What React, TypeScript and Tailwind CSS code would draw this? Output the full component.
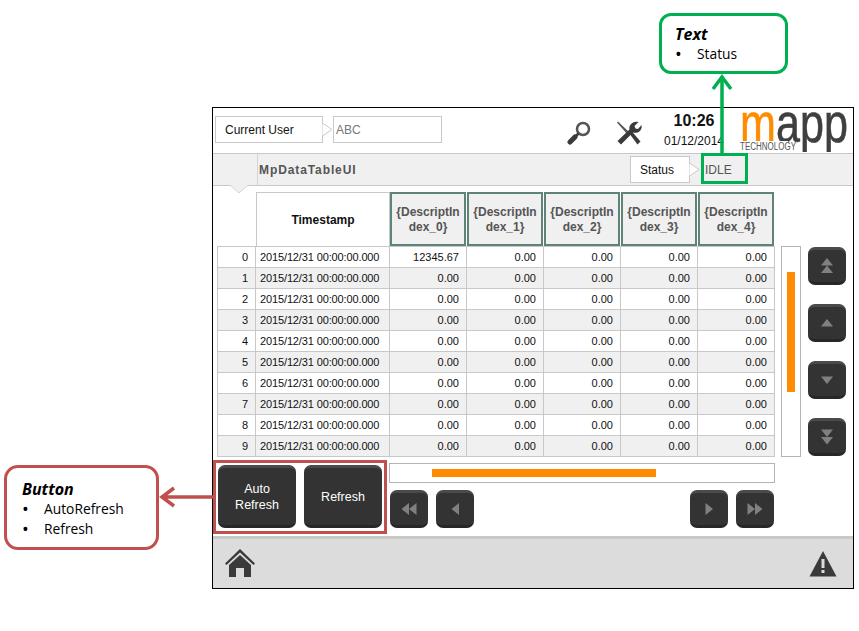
const rows = [0, 1, 2, 3, 4, 5, 6, 7, 8, 9];
const cols = [0, 1, 2, 3, 4];

// dark hardware style key used by the scroll buttons and the refresh buttons
function Key({ className, children }: { className: string; children: React.ReactNode }) {
  return (
    <button className={`flex shrink-0 items-center justify-center rounded-[7px] border-t-[3px] border-b-[3px] border-t-[#4a4a4a] border-b-[#272727] bg-[#333333] text-[12.5px] leading-4 text-white ${className}`}>
      {children}
    </button>
  );
}

function Tri({ d }: { d: string }) {
  return (
    <svg width="22" height="22" viewBox="0 0 22 22" fill="#808080">
      <path d={d} />
    </svg>
  );
}

function Chevron() {
  return (
    <svg width="11" height="28" viewBox="0 0 11 28" className="-ml-px shrink-0">
      <path d="M0.5 7 L10 13.5 L0.5 20" fill="#fff" stroke="#c8c8c8" />
    </svg>
  );
}

function Header() {
  return (
    <div className="flex h-[46px] items-start border-b border-[#c8c8c8]">
      <div className="ml-[2px] mt-2 flex h-[27px] w-[108px] items-center border border-[#c8c8c8] pt-px pl-[9px] text-xs text-[#111]">
        Current User
      </div>
      <div className="mt-2">
        <Chevron />
      </div>
      <div className="mt-2 flex h-[27px] w-[109px] items-center border border-[#c8c8c8] pt-px pl-[2px] text-xs text-[#777]">
        ABC
      </div>
      {/* magnifier */}
      <svg width="24" height="24" viewBox="0 0 24 24" className="ml-[125px] mt-[13px]">
        <circle cx="16" cy="8" r="6" fill="none" stroke="#555" strokeWidth="2.5" />
        <path d="M11.5 12.5 L8.5 15.5" stroke="#3a3a3a" strokeWidth="2.5" />
        <path d="M8 16 L3 21" stroke="#3a3a3a" strokeWidth="5" strokeLinecap="round" />
      </svg>
      {/* tools */}
      <svg width="26" height="24" viewBox="0 0 26 24" className="ml-[25px] mt-[13px]">
        <path d="M1 1.5 L2 0.5 L14 12 L12 14 Z" fill="#555" />
        <path d="M13 12 L15.5 10 L24.5 20.5 L21.5 23.5 Z" fill="#3a3a3a" />
        <path d="M1.5 20 L13.5 8.5 C12.5 4 17 -0.5 22.5 1 L18.5 5 L19.5 7.5 L22 8 L25.5 4 C26.5 9.5 21.5 13 17 11.5 L5 23.5 Z" fill="#3a3a3a" />
      </svg>
      <div className="ml-[21px] mt-[3px] w-[62px] text-center text-[#111]">
        <div className="text-base leading-5 font-bold">10:26</div>
        <div className="mt-[3px] text-xs leading-[14px] whitespace-nowrap">01/12/2014</div>
      </div>
      {/* mapp logo */}
      <div className="relative ml-[15px] h-[44px] w-[110px] overflow-hidden">
        <div className="absolute -top-[13px] left-0 origin-left scale-x-[0.77] text-[56px] leading-[56px] whitespace-nowrap text-[#3f3f3f] [-webkit-text-stroke:0.6px]">
          <span className="text-[#ff8c00]">m</span>app
        </div>
        <div className="absolute top-[33px] left-0 h-[11px] w-[60px] origin-left scale-x-[0.8] bg-white text-[10px] leading-[11px] whitespace-nowrap text-[#555]">
          TECHNOLOGY
        </div>
      </div>
    </div>
  );
}

function TitleBand() {
  return (
    <div className="flex h-8 items-center border-b border-[#c8c8c8] bg-[#f0f0f0]">
      <div className="h-full w-[45px] border-r border-[#d4d4d4]" />
      <div className="ml-[1px] w-[371px] text-xs font-bold tracking-[0.9px] text-[#555]">MpDataTableUI</div>
      <div className="flex h-[27px] w-[60px] items-center border border-[#c8c8c8] bg-white pl-[9px] text-xs text-[#111]">
        Status
      </div>
      <Chevron />
      <div className="ml-[5px] text-xs text-[#555]">IDLE</div>
    </div>
  );
}

function DataTable() {
  return (
    <div className="ml-1 w-[558px]">
      <div className="mt-[6px] flex h-[54px] gap-[1px]">
        <div className="w-[38px]" />
        <div className="-mr-[1px] flex w-[134px] items-center justify-center border border-b-0 border-[#c8c8c8] text-xs font-bold text-[#111]">
          Timestamp
        </div>
        {cols.map((c) => (
          <div
            key={c}
            className="flex h-[54px] w-[76px] items-center justify-center border-2 border-[#5f8376] bg-[#f0f0f0] pt-px text-center text-xs leading-[15px] font-bold text-[#555]"
          >
            <span>
              {"{DescriptIn"}
              <br />
              {`dex_${c}}`}
            </span>
          </div>
        ))}
      </div>
      <div className="border-t border-l border-[#c8c8c8]">
        {rows.map((r) => (
          <div
            key={r}
            className={`flex h-[21px] items-center border-b border-[#c8c8c8] text-[11px] text-[#111] ${r % 2 === 1 ? "bg-[#f0f0f0]" : "bg-white"}`}
          >
            <div className="flex h-full w-[38px] items-center justify-end border-r border-[#c8c8c8] pr-[7px]">{r}</div>
            <div className="flex h-full w-[134px] items-center border-r border-[#c8c8c8] pl-[4px] tracking-[-0.13px] whitespace-nowrap">
              2015/12/31 00:00:00.000
            </div>
            {cols.map((c) => (
              <div key={c} className="flex h-full w-[77px] items-center justify-end border-r border-[#c8c8c8] pr-[7px]">
                {r === 0 && c === 0 ? "12345.67" : "0.00"}
              </div>
            ))}
          </div>
        ))}
      </div>
    </div>
  );
}

function VerticalScroll() {
  return (
    <>
      <div className="ml-[6px] mt-[60px] flex h-[211px] w-5 flex-col items-center border border-[#b4b4b4] bg-white pt-[25px]">
        <div className="h-[120px] w-2 bg-[#ff8c00]" />
      </div>
      <div className="ml-[7px] mt-[61px] flex w-[38px] flex-col gap-[19px]">
        <Key className="h-[38px] w-[38px]">
          <Tri d="M11 3 L17 10.5 L5 10.5 Z M11 10.5 L17 18 L5 18 Z" />
        </Key>
        <Key className="h-[38px] w-[38px]">
          <Tri d="M11 7 L17 14.5 L5 14.5 Z" />
        </Key>
        <Key className="h-[38px] w-[38px]">
          <Tri d="M5 7.5 L17 7.5 L11 15 Z" />
        </Key>
        <Key className="h-[38px] w-[38px]">
          <Tri d="M5 3.5 L17 3.5 L11 11 Z M5 11 L17 11 L11 18.5 Z" />
        </Key>
      </div>
    </>
  );
}

function BottomControls() {
  return (
    <div className="flex h-[79px] pl-[5px] pt-2">
      <Key className="h-[63px] w-[78px]">
        <span>
          Auto
          <br />
          Refresh
        </span>
      </Key>
      <Key className="ml-2 h-[63px] w-[78px]">Refresh</Key>
      <div className="ml-[7px] -mt-[2px] w-[386px]">
        <div className="flex h-[20px] items-center border border-[#b4b4b4] bg-white pl-[42px]">
          <div className="h-2 w-[224px] bg-[#ff8c00]" />
        </div>
        <div className="mt-[7px] flex gap-2 pl-px">
          <Key className="h-[38px] w-[38px]">
            <Tri d="M11 5 L11 17 L3.5 11 Z M18.5 5 L18.5 17 L11 11 Z" />
          </Key>
          <Key className="h-[38px] w-[38px]">
            <Tri d="M15 5 L15 17 L7.5 11 Z" />
          </Key>
          <div className="w-[200px]" />
          <Key className="h-[38px] w-[38px]">
            <Tri d="M7.5 5 L15 11 L7.5 17 Z" />
          </Key>
          <Key className="h-[38px] w-[38px]">
            <Tri d="M3.5 5 L11 11 L3.5 17 Z M11 5 L18.5 11 L11 17 Z" />
          </Key>
        </div>
      </div>
    </div>
  );
}

function Footer() {
  return (
    <div className="flex h-[52px] items-center justify-between border-t-[3px] border-[#c8c8c4] bg-[#dcdcdc] pr-4 pl-[11px]">
      <svg width="32" height="30" viewBox="0 0 32 30" className="-mt-px">
        <path d="M16 1 L31 15.5 L29.5 17 L16 4.5 L2.5 17 L1 15.5 Z" fill="#3a3a3a" />
        <path d="M16 7 L27 17 L27 29 L20 29 L20 20 L12 20 L12 29 L5 29 L5 17 Z" fill="#3a3a3a" />
      </svg>
      <svg width="28" height="27" viewBox="0 0 28 27" className="-mt-px">
        <path d="M14 1 L27.5 26.5 L0.5 26.5 Z" fill="#3a3a3a" />
        <rect x="12.5" y="9" width="3" height="9" fill="#dcdcdc" />
        <rect x="12.5" y="20" width="3" height="3" fill="#dcdcdc" />
      </svg>
    </div>
  );
}

export default function App() {
  return (
    <div className="relative h-[631px] w-[859px] overflow-hidden bg-white pt-[107px] pl-[212px] font-['Liberation_Sans',Arial,sans-serif]">
      {/* the HMI page */}
      <div className="relative h-[482px] w-[642px] border border-black bg-white">
        <Header />
        <TitleBand />
        <svg width="18" height="9" viewBox="0 0 18 9" className="absolute top-[77px] left-[17px]">
          <path d="M0 0 L9 8 L18 0" fill="#f0f0f0" stroke="#d4d4d4" />
        </svg>
        <div className="flex h-[271px]">
          <DataTable />
          <VerticalScroll />
        </div>
        <BottomControls />
        <Footer />
      </div>

      {/* green annotation */}
      <div className="absolute top-[13px] left-[659px] h-[61px] w-[129px] rounded-[12px] border-[3px] border-[#00b050] bg-white pt-2 pl-[13px] font-['Open_Sans',sans-serif] text-[13.8px] leading-[20px] text-black">
        <div className="text-base leading-5 font-bold italic">Text</div>
        <div className="flex">
          <span className="w-[22px] text-lg leading-[20px]">•</span>Status
        </div>
      </div>
      <svg width="24" height="82" viewBox="0 0 24 82" className="absolute top-[73px] left-[710px]">
        <path d="M12 82 L12 3 M3 16 L12 4 L21 16" fill="none" stroke="#00b050" strokeWidth="3.5" />
      </svg>
      <div className="absolute top-[153px] left-[701px] h-[31px] w-[47px] border-[3px] border-[#00b050]" />

      {/* red annotation */}
      <div className="absolute top-[465px] left-[4px] h-[85px] w-[155px] rounded-[14px] border-[3px] border-[#c0504d] bg-white pt-[11px] pl-[15px] font-['Open_Sans',sans-serif] text-[13.8px] leading-[20px] text-black">
        <div className="text-base leading-5 font-bold italic">Button</div>
        <div className="flex">
          <span className="w-[22px] text-lg leading-[20px]">•</span>AutoRefresh
        </div>
        <div className="flex">
          <span className="w-[22px] text-lg leading-[20px]">•</span>Refresh
        </div>
      </div>
      <svg width="56" height="24" viewBox="0 0 56 24" className="absolute top-[485px] left-[158px]">
        <path d="M56 12 L3 12 M16 3 L4 12 L16 21" fill="none" stroke="#c0504d" strokeWidth="3.5" />
      </svg>
      <div className="absolute top-[460px] left-[213px] h-[74px] w-[174px] border-[3px] border-[#c0504d]" />
    </div>
  );
}
